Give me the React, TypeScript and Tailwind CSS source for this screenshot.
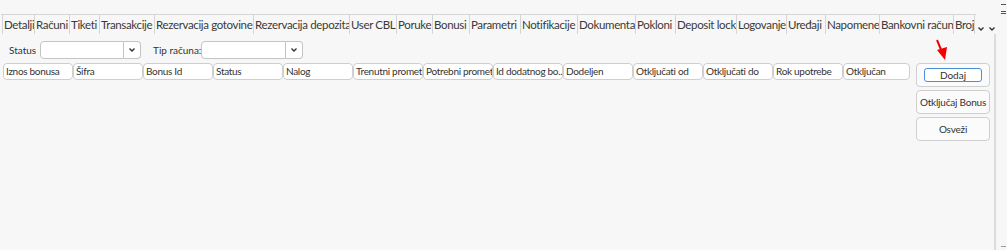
import React from 'react';

const tabs: { label: string; w: number }[] = [
  { label: 'Detalji', w: 32 },
  { label: 'Računi', w: 35 },
  { label: 'Tiketi', w: 30 },
  { label: 'Transakcije', w: 55 },
  { label: 'Rezervacija gotovine', w: 99 },
  { label: 'Rezervacija depozita', w: 96 },
  { label: 'User CBL', w: 47 },
  { label: 'Poruke', w: 36 },
  { label: 'Bonusi', w: 37 },
  { label: 'Parametri', w: 51 },
  { label: 'Notifikacije', w: 57 },
  { label: 'Dokumenta', w: 58 },
  { label: 'Pokloni', w: 40 },
  { label: 'Deposit lock', w: 61 },
  { label: 'Logovanje', w: 50 },
  { label: 'Uređaji', w: 39 },
  { label: 'Napomene', w: 54 },
  { label: 'Bankovni račun', w: 74 },
  { label: 'Broj', w: 21 },
];

const columns = [
  'Iznos bonusa',
  'Šifra',
  'Bonus Id',
  'Status',
  'Nalog',
  'Trenutni promet',
  'Potrebni promet',
  'Id dodatnog bo...',
  'Dodeljen',
  'Otključati od',
  'Otključati do',
  'Rok upotrebe',
  'Otključan',
];

const Chevron = () => (
  <svg width="8" height="6" viewBox="0 0 8 6" className="text-[#333]">
    <path d="M1.5 1.5 L4 4 L6.5 1.5" fill="none" stroke="currentColor" strokeWidth="1.4" />
  </svg>
);

function Combo({ width }: { width: number }) {
  return (
    <div className="flex h-[18px]">
      <div
        className="h-full rounded-l-[4px] border border-[#c4c4c4] bg-white"
        style={{ width }}
      />
      <div className="flex h-full w-[17px] items-center justify-center rounded-r-[4px] border border-l-0 border-[#c4c4c4] bg-white">
        <Chevron />
      </div>
    </div>
  );
}

function SideButton({ label, active }: { label: string; active?: boolean }) {
  return (
    <div className="flex h-[24px] w-[74px] items-center justify-center rounded-[4px] border border-[#cfcfcf] bg-[#fbfbfb]">
      {active ? (
        <div className="flex h-[14px] w-[58px] items-center justify-center rounded-[3px] border border-[#4a90d9] bg-white text-[10px] text-[#333]">
          {label}
        </div>
      ) : (
        <span className="whitespace-nowrap text-[10px] tracking-[-0.2px] text-[#333]">{label}</span>
      )}
    </div>
  );
}

export default function App() {
  return (
    <div
      className="relative h-[250px] w-[1007px] overflow-hidden bg-[#f7f7f7] text-[#333]"
      style={{ fontFamily: 'Lato, "Noto Sans", sans-serif' }}
    >
      {/* window edge marks */}
      <div className="absolute right-[1px] top-[4px] h-[1px] w-[5px] bg-[#555]" />
      <div className="absolute right-[1px] top-[11px] h-[1px] w-[5px] bg-[#555]" />
      <div className="absolute right-[1px] top-[13px] h-[1px] w-[5px] bg-[#555]" />
      <div className="absolute bottom-[3px] right-[1px] h-[1px] w-[5px] bg-[#999]" />

      <div className="pt-[14px]">
        {/* tab bar */}
        <div className="ml-[1px] flex h-[20px]">
          <div className="flex h-full w-[975px] overflow-hidden border-t border-[#d5d5d5]">
            <div className="w-[2px] shrink-0 border-r border-[#d5d5d5]" />
            {tabs.map((t) => (
              <div
                key={t.label}
                className="flex h-full shrink-0 items-center overflow-hidden whitespace-nowrap border-r border-[#d5d5d5] pl-[1px] text-[11.5px] tracking-[-0.35px] text-[#3a3a3a]"
                style={{ width: t.w }}
              >
                {t.label}
              </div>
            ))}
          </div>
          <div className="flex h-full w-[21px] items-end justify-around pb-[2px]">
            <Chevron />
            <Chevron />
          </div>
        </div>

        {/* pane */}
        <div className="ml-[1px] flex h-[216px] w-[995px] border-r-[2px] border-[#dcdcdc]">
          <div className="flex-1">
            <div className="mt-[7px] flex items-center">
              <span className="ml-[8px] w-[31px] whitespace-nowrap text-[10px]">Status</span>
              <Combo width={84} />
              <span className="ml-[12px] w-[48px] whitespace-nowrap text-[10px]">Tip računa:</span>
              <Combo width={85} />
            </div>
            <div className="ml-[2px] mt-[4px] flex">
              {columns.map((c, i) => (
                <div
                  key={c}
                  className="flex h-[17px] shrink-0 items-center overflow-hidden whitespace-nowrap rounded-[4px] border border-[#cfcfcf] bg-white pl-[2px] text-[10px] tracking-[-0.3px] text-[#333]"
                  style={{ width: i === columns.length - 1 ? 67 : 70 }}
                >
                  {c}
                </div>
              ))}
            </div>
          </div>
          <div className="mr-[4px] mt-[29px] flex w-[74px] flex-col gap-[3px]">
            <SideButton label="Dodaj" active />
            <SideButton label="Otključaj Bonus" />
            <SideButton label="Osveži" />
          </div>
        </div>
      </div>

      {/* red annotation arrow */}
      <svg className="absolute left-[932px] top-[38px]" width="20" height="24" viewBox="0 0 20 24">
        <line x1="5" y1="2" x2="10" y2="14" stroke="#f20000" strokeWidth="2" />
        <polygon points="5,12 15,9 13,22" fill="#f20000" />
      </svg>
    </div>
  );
}
